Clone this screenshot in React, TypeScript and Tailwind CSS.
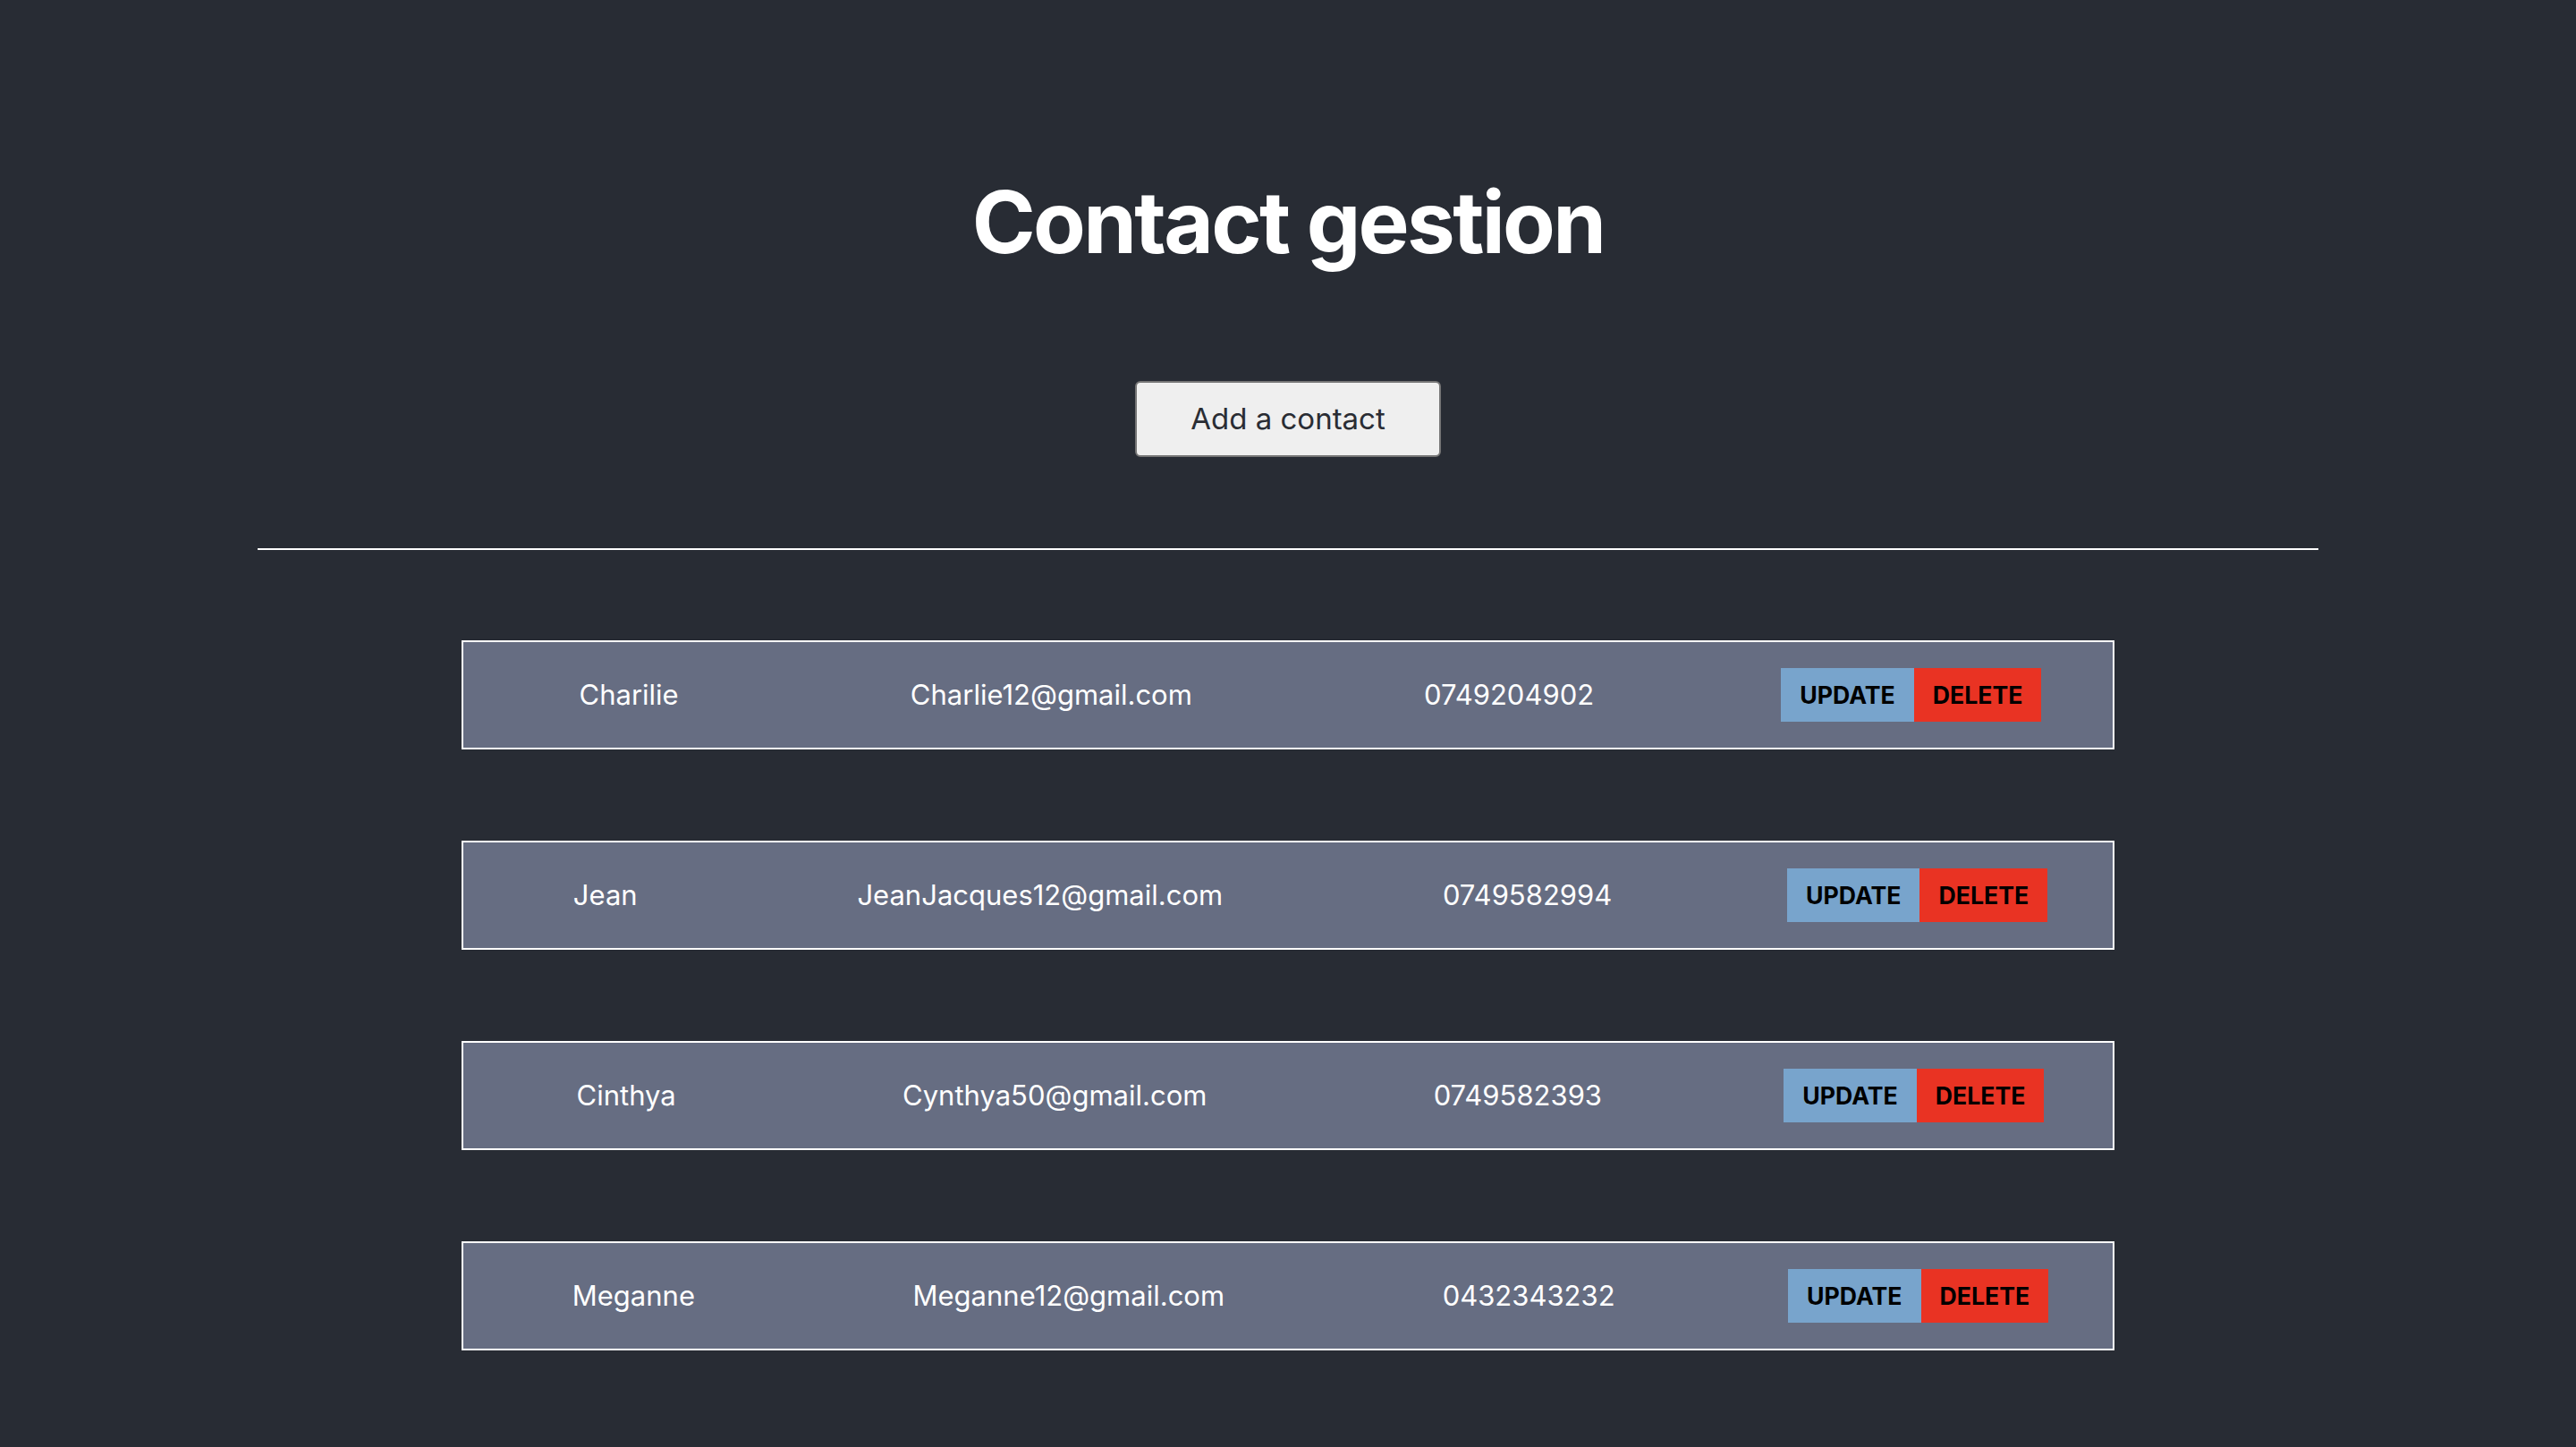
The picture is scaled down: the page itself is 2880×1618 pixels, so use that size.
const contacts = [
  { name: "Charilie", email: "Charlie12@gmail.com", phone: "0749204902" },
  { name: "Jean", email: "JeanJacques12@gmail.com", phone: "0749582994" },
  { name: "Cinthya", email: "Cynthya50@gmail.com", phone: "0749582393" },
  { name: "Meganne", email: "Meganne12@gmail.com", phone: "0432343232" },
];

const ContactRow = ({ contact }: { contact: (typeof contacts)[number] }) => {
  return (
    <div className="flex items-center w-full h-[122px] bg-[#666d82] border-2 border-white text-white text-[31px]">
      <p className="flex-auto px-[50px] text-center">{contact.name}</p>
      <p className="flex-auto px-[50px] text-center">{contact.email}</p>
      <p className="flex-auto px-[50px] text-center">{contact.phone}</p>
      <div className="flex-auto flex justify-center">
        <button className="bg-[#78a4cc] text-black font-bold text-[26.67px] leading-[32px] px-[21px] py-[14px]">
          UPDATE
        </button>
        <button className="bg-[#e93323] text-black font-bold text-[26.67px] leading-[32px] px-[21px] py-[14px]">
          DELETE
        </button>
      </div>
    </div>
  );
};

const App = () => {
  return (
    <div
      className="min-h-screen bg-[#282c34] flex flex-col items-center pt-[200px] pb-[100px]"
      style={{ fontFamily: "Inter, 'Noto Sans', sans-serif" }}
    >
      <h1 className="text-white font-bold text-[96px] leading-none tracking-[-0.028em]">
        Contact gestion
      </h1>

      <button className="mt-[130px] w-[342px] h-[85px] bg-[#efefef] border-2 border-[#767676] rounded-[6px] text-[#2a2d34] text-[33px]">
        Add a contact
      </button>

      <hr className="w-[80%] mt-[102px] border-0 border-t-2 border-white" />

      {/* contacts list */}
      <div className="w-[1848px] mt-[101px] flex flex-col gap-[102px]">
        {contacts.map((c) => (
          <ContactRow key={c.email} contact={c} />
        ))}
      </div>
    </div>
  );
};

export default App;
